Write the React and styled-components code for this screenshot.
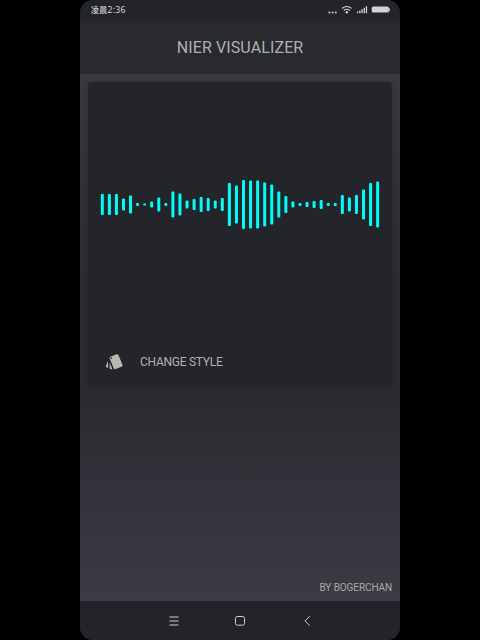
import React from 'react';
import styled, { createGlobalStyle } from 'styled-components';
import { MdStyle } from 'react-icons/md';

const GlobalStyle = createGlobalStyle`
  *, *::before, *::after { box-sizing: border-box; }
  body { margin: 0; background: #000; overflow: hidden; }
`;

const Stage = styled.main`
  width: 480px;
  height: 640px;
  display: flex;
  justify-content: center;
  background: #000;
`;

const Phone = styled.div`
  width: 320px;
  height: 640px;
  display: flex;
  flex-direction: column;
  overflow: hidden;
  border-radius: 13px;
  background: #232429;
  font-family: Roboto, 'Noto Sans CJK SC', sans-serif;
  color: #b4b4b5;
`;

const TopArea = styled.header`
  height: 74px;
  flex: none;
  background: linear-gradient(#232429 0, #232429 19px, #292a2f 24px, #292a2f 100%);
`;

const StatusBar = styled.div`
  height: 20px;
  padding: 0 10px 0 11px;
  display: flex;
  align-items: center;
  justify-content: space-between;
`;

const Clock = styled.span`
  font: 8.7px/20px 'Noto Sans', 'Noto Sans CJK SC', sans-serif;
  letter-spacing: 0.25px;
  color: #d4d4d6;
`;

const Hour = styled.span`
  font-size: 8px;
  font-weight: 500;
`;

const StatusIcons = styled.svg`
  width: 64px;
  height: 20px;
  display: block;
`;

const Title = styled.h1`
  height: 54px;
  margin: 0;
  padding-top: 1px;
  font-size: 16px;
  font-weight: 400;
  letter-spacing: 0.12px;
  line-height: 54px;
  text-align: center;
  color: #b0b0b1;
`;

const Content = styled.section`
  flex: 1;
  display: flex;
  flex-direction: column;
  justify-content: space-between;
  padding: 8px 8px 6px;
  background: linear-gradient(#38393d 0%, #303135 22%, #2a2b2f 43%, #2a2b2f 61%, #32323a 78%, #3b3b43 100%);
`;

const Card = styled.article`
  height: 305px;
  display: flex;
  flex-direction: column;
  border-radius: 4px;
  background: #24252a;
  box-shadow: 0 1px 4px rgba(28, 29, 33, 0.3);
`;

const Wave = styled.svg`
  width: 304px;
  height: 254px;
  display: block;
`;

const StyleButton = styled.button`
  height: 51px;
  display: flex;
  align-items: center;
  gap: 16px;
  padding: 0 0 1px 17px;
  border: 0;
  background: none;
  color: #b2b2b0;

  svg { width: 19px; height: 19px; color: #b7b8b0; }
`;

const ButtonLabel = styled.span`
  padding-top: 2px;
  font: 400 12px/16px Roboto, sans-serif;
  letter-spacing: -0.27px;
`;

const Credit = styled.footer`
  font-size: 10px;
  letter-spacing: -0.09px;
  line-height: 14px;
  text-align: right;
  color: #aaa9a9;
`;

const NavBar = styled.nav`
  height: 39px;
  flex: none;
  display: flex;
  justify-content: center;
  align-items: center;
  gap: 50px;
  background: #232429;
`;

const NavIcon = styled.svg`
  width: 16px;
  height: 16px;
  display: block;
  fill: none;
  stroke: #d0d0d2;
  stroke-width: 1;
`;

const levels = [
  21, 21, 21, 12, 18, 3, 2, 6, 14, 3, 26, 22, 8, 11, 15, 13, 8, 13, 43, 38,
  49, 48, 48, 44, 40, 26, 17, 6, 3, 5, 7, 9, 3, 3, 19, 14, 19, 30, 43, 46,
];

function Status() {
  return (
    <StatusIcons viewBox="326 0 64 20" aria-hidden="true">
      <g fill="#d2d2d5">
        <circle cx="329.4" cy="12.4" r="1" />
        <circle cx="332.6" cy="12.4" r="1" />
        <circle cx="335.8" cy="12.4" r="1" />
        <circle cx="346.8" cy="12.2" r="1.2" />
        <rect x="357" y="11.5" width="1.3" height="1.7" />
        <rect x="359.2" y="10.5" width="1.3" height="2.7" />
        <rect x="361.4" y="9.2" width="1.3" height="4" />
        <rect x="363.6" y="7.8" width="1.3" height="5.4" />
        <rect x="365.8" y="6.2" width="1.3" height="7" />
        <rect x="371.7" y="6.4" width="17.2" height="6.2" rx="1.6" />
        <rect x="389.1" y="8.2" width="0.9" height="3" rx="0.4" />
      </g>
      <g fill="none" stroke="#d2d2d5" strokeWidth="1.2">
        <path d="M342 8.4Q346.8 4.6 351.6 8.4" />
        <path d="M343.8 10.5Q346.8 8 349.8 10.5" />
      </g>
    </StatusIcons>
  );
}

export default function App() {
  return (
    <Stage>
      <GlobalStyle />
      <Phone>
        <TopArea>
          <StatusBar>
            <Clock><Hour>凌晨</Hour>2:36</Clock>
            <Status />
          </StatusBar>
          <Title>NIER VISUALIZER</Title>
        </TopArea>
        <Content>
          <Card>
            <Wave viewBox="0 0 304 254">
              {levels.map((level, i) => (
                <rect
                  key={i}
                  x={12.8 + i * 7.06}
                  y={122.6 - level / 2}
                  width="3"
                  height={level}
                  rx={Math.min(1, level / 2)}
                  fill="#00fdf8"
                />
              ))}
            </Wave>
            <StyleButton><MdStyle /><ButtonLabel>CHANGE STYLE</ButtonLabel></StyleButton>
          </Card>
          <Credit>BY BOGERCHAN</Credit>
        </Content>
        <NavBar>
          <NavIcon viewBox="0 0 16 16"><path d="M3.5 4h9M3.5 8h9M3.5 12h9" /></NavIcon>
          <NavIcon viewBox="0 0 16 16"><rect x="3.5" y="3.5" width="9" height="8.7" rx="1.8" /></NavIcon>
          <NavIcon viewBox="0 0 16 16"><path d="M11.7 3.2L7 7.9l4.7 4.7" /></NavIcon>
        </NavBar>
      </Phone>
    </Stage>
  );
}
